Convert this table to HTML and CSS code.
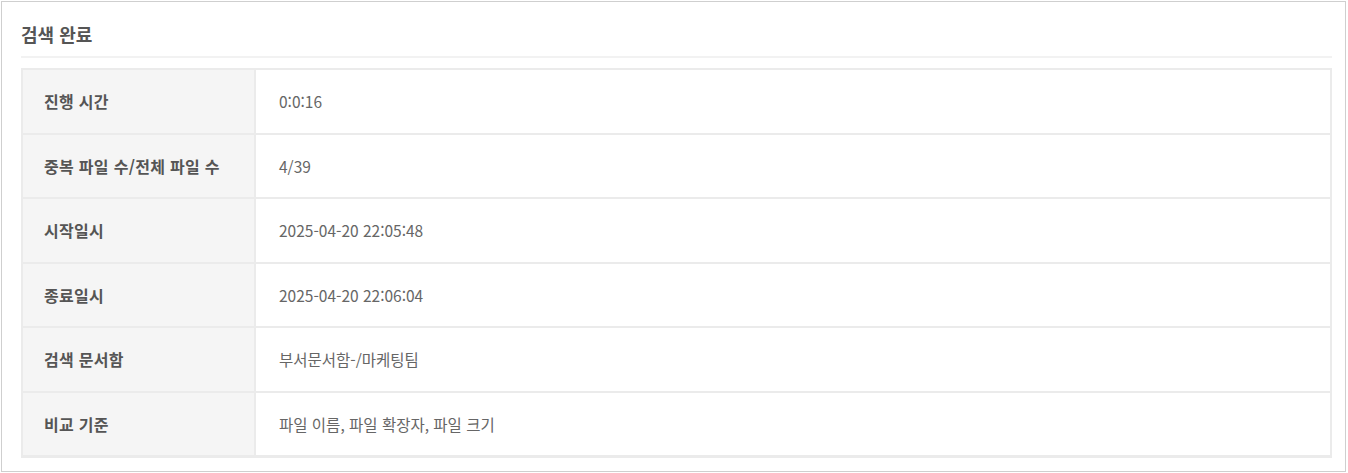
FILE: index.html
```html
<!DOCTYPE html>
<html lang="ko">
<head>
<meta charset="utf-8">
<link rel="stylesheet" href="styles.css">
</head>
<body>
<div class="panel">
  <h2 class="title">검색 완료</h2>
  <div class="info">
    <div class="row"><div class="label">진행 시간</div><div class="value">0:0:16</div></div>
    <div class="row"><div class="label">중복 파일 수/전체 파일 수</div><div class="value">4/39</div></div>
    <div class="row"><div class="label">시작일시</div><div class="value">2025-04-20 22:05:48</div></div>
    <div class="row"><div class="label">종료일시</div><div class="value">2025-04-20 22:06:04</div></div>
    <div class="row"><div class="label">검색 문서함</div><div class="value">부서문서함-/마케팅팀</div></div>
    <div class="row"><div class="label">비교 기준</div><div class="value">파일 이름, 파일 확장자, 파일 크기</div></div>
  </div>
</div>
</body>
</html>
```

FILE: styles.css
```css
* { box-sizing: border-box; }
html, body { margin: 0; padding: 0; background: #fff; }
body {
  font-family: "Noto Sans CJK KR", "Noto Sans", sans-serif;
  color: #666;
}
.panel {
  margin: 1px 2px 0 1px;
  height: 471px;
  border: 1px solid #cfcfcf;
  padding: 0 13px 0 19px;
}
.title {
  margin: 0;
  height: 56px;
  padding-top: 19px;
  font-size: 18px;
  line-height: 26px;
  font-weight: 700;
  color: #555;
  border-bottom: 2px solid #f2f2f2;
}
.info {
  margin-top: 10px;
  border: 2px solid #ebebeb;
  border-bottom-width: 1px;
}
.row {
  display: grid;
  grid-template-columns: 233px 1fr;
  height: 64.5px;
  border-bottom: 2px solid #ebebeb;
}
.label {
  background: #f5f5f5;
  border-right: 2px solid #ebebeb;
  display: flex;
  align-items: center;
  padding-left: 21px;
  font-size: 16px;
  letter-spacing: 0.3px;
  font-weight: 700;
  color: #555;
}
.value {
  display: flex;
  align-items: center;
  padding-left: 23px;
  font-size: 15.5px;
  color: #666;
}
```
